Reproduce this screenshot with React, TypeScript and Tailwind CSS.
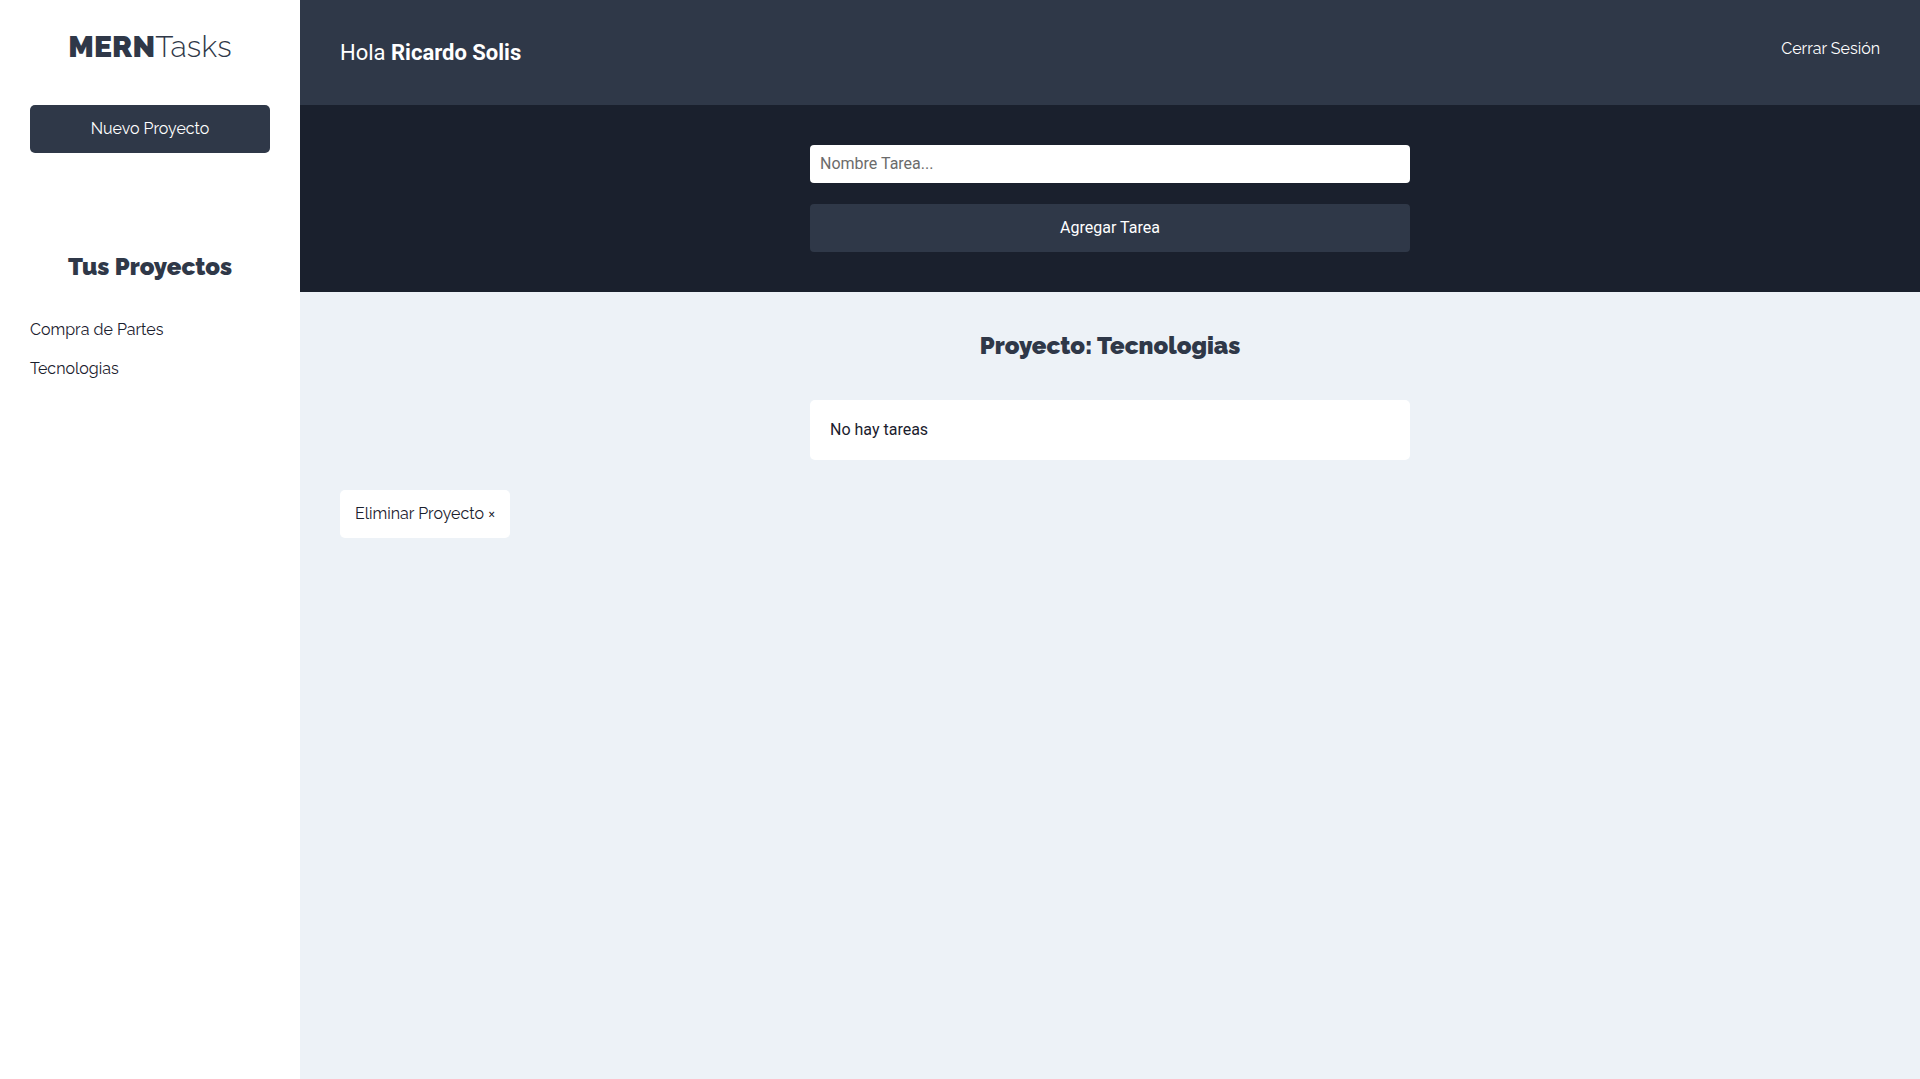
import React from "react";

const raleway = "font-['Raleway','Lato',sans-serif]";
const roboto = "font-['Roboto',sans-serif]";

const proyectos = ["Compra de Partes", "Tecnologias"];

const Sidebar = () => {
  return (
    <aside className={`w-[300px] shrink-0 bg-white flex flex-col px-[30px] ${raleway}`}>
      {/* Logo */}
      <h1 className="mt-[28px] h-[38px] text-center text-[30px] leading-[38px] text-[#2f3848] tracking-[0.2px]">
        <span className="font-black">MERN</span>
        <span className="font-light">Tasks</span>
      </h1>

      <button className="mt-[39px] h-[48px] w-full rounded-[5px] bg-[#2f3848] text-[16px] text-white">
        Nuevo Proyecto
      </button>

      {/* Proyectos */}
      <h2 className="mt-[99px] text-center text-[24px] leading-[30px] font-black text-[#2f3848]">
        Tus Proyectos
      </h2>
      <ul className="mt-[38px] flex flex-col gap-[19px]">
        {proyectos.map((p) => (
          <li key={p} className="text-[16px] leading-[20px] text-[#1a202d]">
            {p}
          </li>
        ))}
      </ul>
    </aside>
  );
};

export default function App() {
  return (
    <div className="flex min-h-[1079px] w-full bg-white">
      <Sidebar />

      <div className="flex flex-1 flex-col bg-[#edf2f7]">
        {/* Header */}
        <header className="flex h-[105px] items-center justify-between bg-[#2f3848] px-[40px]">
          <p className={`${roboto} text-[22px] text-white`}>
            Hola <span className="font-bold">Ricardo Solis</span>
          </p>
          <button className={`${raleway} -mt-[8px] text-[16px] text-white`}>Cerrar Sesión</button>
        </header>

        {/* Form */}
        <section className="flex flex-col items-center bg-[#1a202d] pt-[40px] pb-[40px]">
          <input
            type="text"
            placeholder="Nombre Tarea..."
            className={`${roboto} h-[38px] w-[600px] rounded-[4px] bg-white px-[10px] pb-[2px] text-[16px] text-gray-800 placeholder:text-[#6b6b6b] outline-none`}
          />
          <button
            className={`${roboto} mt-[21px] h-[48px] w-[600px] rounded-[4px] bg-[#2f3848] pb-[1px] text-[16px] text-white`}
          >
            Agregar Tarea
          </button>
        </section>

        {/* Tareas */}
        <main className="flex flex-col px-[40px]">
          <h2 className={`${raleway} mt-[40px] text-center text-[24px] leading-[28px] font-black text-[#2f3848]`}>
            Proyecto: Tecnologias
          </h2>
          <div className="mt-[40px] flex justify-center">
            <div className="h-[60px] w-[600px] rounded-[5px] bg-white px-[20px] flex items-center">
              <p className={`${roboto} text-[16px] text-[#1a202d]`}>No hay tareas</p>
            </div>
          </div>
          <div className="mt-[30px]">
            <button
              className={`${raleway} h-[48px] rounded-[5px] bg-white px-[15px] text-[16px] text-[#1a202d]`}
            >
              Eliminar Proyecto &times;
            </button>
          </div>
        </main>
      </div>
    </div>
  );
}
